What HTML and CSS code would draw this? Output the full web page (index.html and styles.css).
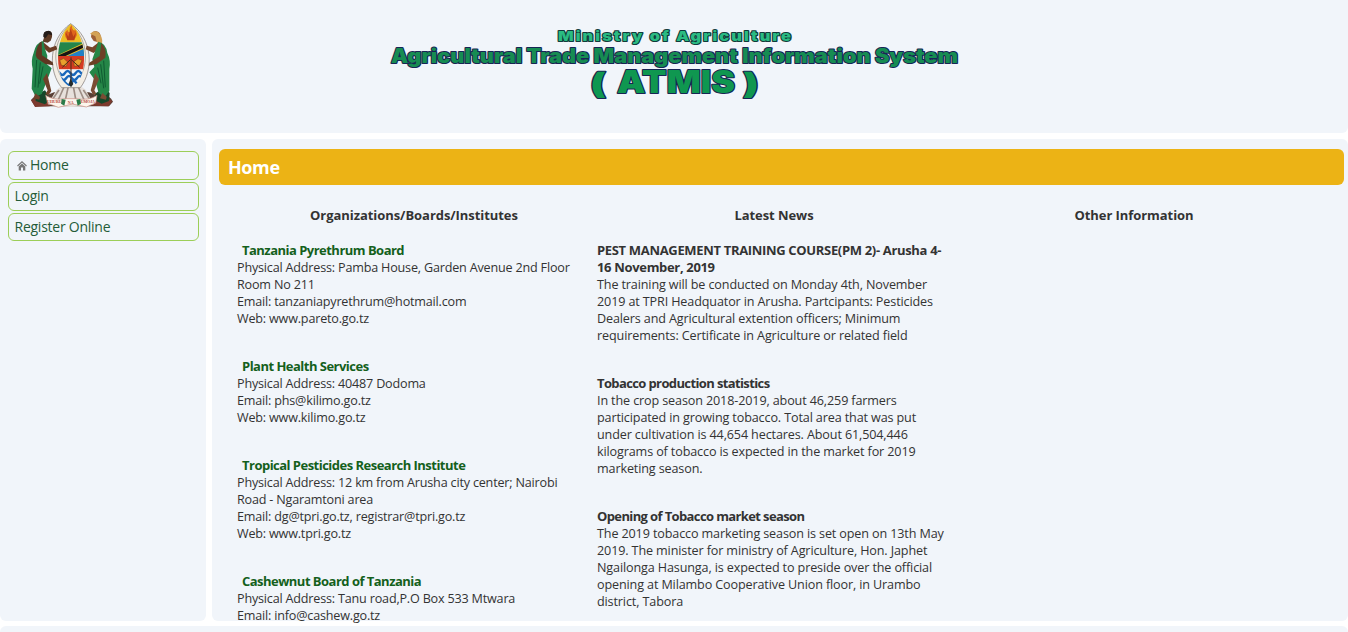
FILE: index.html
```html
<!DOCTYPE html>
<html lang="en">
<head>
<meta charset="utf-8">
<title>ATMIS</title>
<link rel="stylesheet" href="styles.css">
</head>
<body>
<header class="header">
<svg class="emblem" viewBox="0 0 315 300" aria-hidden="true">
  <path d="M36 255Q50 238 75 244L105 232H210L240 242Q270 236 282 260L270 274H48Z" fill="#593f35"/>
  <path d="M36 256l20-10 20 12 24-8-8 24-44 2zM214 250l24 6 24-10 18 12-12 16-48-2z" fill="#7d3a2e"/>
  <path d="M48 232l10-8 8 8 12-6 8 12 4 18-12 12-28-10zM228 236l12-8 10 6 12-10 10 10-2 24-22 8-20-10z" fill="#16472a"/>
  <path d="M113 224Q156 190 200 224L224 268Q156 284 86 268Z" fill="#e7e1dc"/>
  <path d="M120 225l-25 36M135 216l-24 54M148 214l-12 55M163 214l10 55M178 216l24 54M193 225l25 36" stroke="#9c8d85" stroke-width="5"/>
  <path d="M155 26C86 74 88 170 128 218H184C225 165 221 70 155 26Z" fill="#f3eee5" stroke="#77706d" stroke-width="2"/>
  <path d="M155 28C98 75 98 160 141 205" fill="none" stroke="#8b8983" stroke-width="2"/>
  <path d="M155 28C211 75 212 160 169 205" fill="none" stroke="#8b8983" stroke-width="2"/>
  <clipPath id="shield"><path d="M155 27C113 62 108 148 130 194Q142 211 156 216Q170 211 182 194C205 148 199 62 155 27Z"/></clipPath>
  <g clip-path="url(#shield)">
    <path d="M100 20h110v62H100z" fill="#edbd25"/>
    <path d="M100 82h110v42H100z" fill="#24854a"/>
    <path d="M210 82v42h-80z" fill="#237fc6"/>
    <path d="M108 124L202 80v18l-58 26z" fill="#e7c02b"/>
    <path d="M112 124L202 84v10l-64 30z" fill="#151515"/>
    <path d="M100 123h110v41H100z" fill="#d63b21"/>
    <path d="M100 163h110v55H100z" fill="#f4f6f7"/>
    <path d="M106 174q8-12 16 0t16 0 16 0 16 0 16 0 16 0M110 189q8-12 16 0t16 0 16 0 16 0 16 0M124 204q8-12 16 0t16 0 16 0 16 0" fill="none" stroke="#1766ba" stroke-width="7"/>
  </g>
  <path d="M145 74q-15-18 1-30-1 9 6 7-2-15 7-21-2 13 7 17l2-4q12 17-3 31z" fill="#df651c"/>
  <path d="M140 52l5 24h21l5-24-8 13-8-24-7 24z" fill="#b73d17"/>
  <path d="M122 136l12-6 12 11-4 13-15-3zM164 140l13-9 12 5-7 15-16 3z" fill="#e8a02c" stroke="#85421b" stroke-width="2"/>
  <path d="M156 127v82M130 157l24-23M182 157l-25-23" stroke="#472a18" stroke-width="3"/>
  <path d="M155 190l-6 17 7 10 7-10z" fill="#252b2b"/>
  <path d="M72 81l21 17 18-6 4 11-25 10-24-20z" fill="#6b3c24"/>
  <path d="M75 68q-4-20 13-20 14 1 11 18l-4 11-9 6-15-3z" fill="#5f3b25"/>
  <path d="M73 66q-2-19 16-19 11 2 10 14l-11-3-8 11z" fill="#241c19"/>
  <path d="M73 78q-22 4-29 35-9 23-3 48l-3 60 12 24 18-8 12-30 18-47-15-13 2-25-8-23z" fill="#228449"/>
  <path d="M68 79q-15 9-18 42l4 9 25 17 24 4-2-9-32-21z" fill="#5f3722"/>
  <path d="M53 135l-5 82M64 142l-7 76M72 154l-10 52" stroke="#0f5a31" stroke-width="3"/>
  <path d="M84 174l8 34 5 20-8 12-10-2 7-12-14-34zM49 235l14 10-2 9-18-4z" fill="#6f4129"/>
  <path d="M241 80l-21 17-17-5-3 11 24 11 23-20z" fill="#76452b"/>
  <path d="M216 66q0-18 14-18 16 2 15 20l-7 14-14-4z" fill="#9e6037"/>
  <path d="M213 56q19-15 30 2 10 15 5 34l-14-10-5-18z" fill="#d3a256"/>
  <path d="M238 80q23 4 27 34 11 22 6 48l0 66-14 18-18-12-11-38-17-24 15-16-6-23z" fill="#258647"/>
  <path d="M247 84q17 18 12 44l-26 19-24 5 2-9 31-20z" fill="#6d4026"/>
  <path d="M254 137l5 80M245 148l9 72M236 158l10 47" stroke="#0f5a31" stroke-width="3"/>
  <path d="M228 174l-8 34-5 18 7 13 11-1-7-12 14-34zM250 234l13 11-2 9-18-4z" fill="#7b4c34"/>
  <path d="M80 241q25 16 57 10l35 0q38 7 62-10l-4 23-28 12-42-9-42 10-32-12z" fill="#fcf6ed" stroke="#c98b7e" stroke-width="2"/>
  <path d="M128 252l12 2-4 18-10-6zM172 254l12-2 2 14-10 6z" fill="#2a7c49"/>
  <g class="motto"><text x="84" y="264" textLength="44">UHURU</text><text x="146" y="267" textLength="18">NA</text><text x="185" y="264" textLength="43">UMOJA</text></g>
</svg>
<svg class="banner" viewBox="0 0 600 90" role="img" aria-label="Agricultural Trade Management Information System">
  <text class="ministry" x="178" y="21" textLength="235" lengthAdjust="spacingAndGlyphs">Ministry of Agriculture</text>
  <text class="system" x="11" y="43" textLength="567" lengthAdjust="spacingAndGlyphs">Agricultural Trade Management Information System</text>
  <text class="acronym paren" x="210" y="74" textLength="16" lengthAdjust="spacingAndGlyphs">(</text>
  <text class="acronym" x="237" y="73" textLength="118" lengthAdjust="spacingAndGlyphs">ATMIS</text>
  <text class="acronym paren" x="363" y="74" textLength="16" lengthAdjust="spacingAndGlyphs">)</text>
</svg>
</header>
<div class="body">
<nav class="sidebar">
  <a class="item"><svg class="house" viewBox="0 0 10 10"><path d="M0.5 5L5 .8 9.5 5" fill="none" stroke="#777" stroke-width="1.1"/><path d="M1.7 5.4L5 2.6l3.3 2.8v4.1H6V6.5H4v3H1.7z" fill="#777"/></svg>Home</a>
  <a class="item">Login</a>
  <a class="item">Register Online</a>
</nav>
<main class="main">
  <h1 class="title">Home</h1>
  <div class="columns">
    <section class="column orgs">
      <h2 class="heading">Organizations/Boards/Institutes</h2>
      <article class="entry"><h3 class="name">Tanzania Pyrethrum Board</h3><p>Physical Address: Pamba House, Garden Avenue 2nd Floor<br>Room No 211<br>Email: tanzaniapyrethrum@hotmail.com<br>Web: www.pareto.go.tz</p></article>
      <article class="entry"><h3 class="name">Plant Health Services</h3><p>Physical Address: 40487 Dodoma<br>Email: phs@kilimo.go.tz<br>Web: www.kilimo.go.tz</p></article>
      <article class="entry"><h3 class="name">Tropical Pesticides Research Institute</h3><p>Physical Address: 12 km from Arusha city center; Nairobi<br>Road - Ngaramtoni area<br>Email: dg@tpri.go.tz, registrar@tpri.go.tz<br>Web: www.tpri.go.tz</p></article>
      <article class="entry"><h3 class="name">Cashewnut Board of Tanzania</h3><p>Physical Address: Tanu road,P.O Box 533 Mtwara<br>Email: info@cashew.go.tz</p></article>
    </section>
    <section class="column news">
      <h2 class="heading">Latest News</h2>
      <article class="entry"><h3 class="name course">PEST MANAGEMENT TRAINING COURSE(PM 2)- Arusha 4-<br>16 November, 2019</h3><p>The training will be conducted on Monday 4th, November<br>2019 at TPRI Headquator in Arusha. Partcipants: Pesticides<br>Dealers and Agricultural extention officers; Minimum<br>requirements: Certificate in Agriculture or related field</p></article>
      <article class="entry"><h3 class="name">Tobacco production statistics</h3><p>In the crop season 2018-2019, about 46,259 farmers<br>participated in growing tobacco. Total area that was put<br>under cultivation is 44,654 hectares. About 61,504,446<br>kilograms of tobacco is expected in the market for 2019<br>marketing season.</p></article>
      <article class="entry"><h3 class="name">Opening of Tobacco market season</h3><p>The 2019 tobacco marketing season is set open on 13th May<br>2019. The minister for ministry of Agriculture, Hon. Japhet<br>Ngailonga Hasunga, is expected to preside over the official<br>opening at Milambo Cooperative Union floor, in Urambo<br>district, Tabora</p></article>
    </section>
    <section class="column"><h2 class="heading">Other Information</h2></section>
  </div>
</main>
</div>
<footer class="footer"></footer>
</body>
</html>
```
FILE: styles.css
```css
* { box-sizing: border-box; }
body { margin: 0; height: 632px; overflow: hidden; background: #fff; color: #333; font: 13px/17px "Open Sans", "Noto Sans", sans-serif; }
h1, h2, h3, p { margin: 0; }
.header { display: flex; height: 133px; padding: 15px 0 0 19px; background: #f1f5fa; border-radius: 0 0 6px 6px; }
.emblem { width: 105px; height: 100px; }
.motto { font: bold 12px "Liberation Serif", serif; fill: #b4493d; }
.banner { width: 600px; height: 90px; margin: 5px 0 0 256px; }
.banner text { paint-order: stroke; stroke-linejoin: round; font-family: Inter, sans-serif; font-weight: 900; }
.ministry { font-size: 13.5px; letter-spacing: 1.7px; fill: #2abb82; stroke: #103b3b; stroke-width: 2px; }
.system { font-size: 19.5px; fill: #168c52; stroke: #172554; stroke-width: 2px; }
.acronym { font-size: 31px; fill: #0f9750; stroke: #172554; stroke-width: 2px; }
.paren { font-size: 29px; }
.body { display: flex; gap: 6px; height: 482px; margin-top: 6px; }
.sidebar { display: flex; flex-direction: column; gap: 2px; width: 206px; padding: 12px 7px 0 8px; background: #f1f5fa; border-radius: 6px; }
.item { display: flex; align-items: center; height: 29px; padding: 0 0 2px 5.5px; border: 1px solid #9cce58; border-radius: 6px; color: #245c38; font-size: 14px; letter-spacing: -0.25px; }
.item:last-child { height: 28px; }
.house { width: 10px; height: 10px; margin: 2px 3px 0 2.5px; }
.main { flex: 1; padding: 10px 4px 0 7px; background: #f1f5fa; border-radius: 6px; }
.title { height: 36px; padding: 0 0 0 9px; border-radius: 6px; background: #ecb315; color: #fff; font-size: 18px; line-height: 36px; letter-spacing: -0.4px; }
.columns { display: grid; grid-template-columns: repeat(3, 360px); padding: 22px 0 0 15px; }
.column { display: flex; flex-direction: column; white-space: nowrap; }
.heading { margin-bottom: 18px; font-size: 13px; line-height: 17px; text-align: center; letter-spacing: -0.06px; }
.entry { padding-left: 3px; margin-bottom: 31px; font-size: 12.6px; letter-spacing: -0.19px; }
.news .entry { letter-spacing: -0.13px; }
.name { font-size: 13px; line-height: 17px; letter-spacing: -0.52px; }
.news .name { letter-spacing: -0.62px; }
.news .course { letter-spacing: -0.33px; }
.orgs .name { padding-left: 5px; color: #14601c; }
.footer { height: 20px; margin-top: 5px; background: #f1f5fa; border-radius: 6px; }
```
